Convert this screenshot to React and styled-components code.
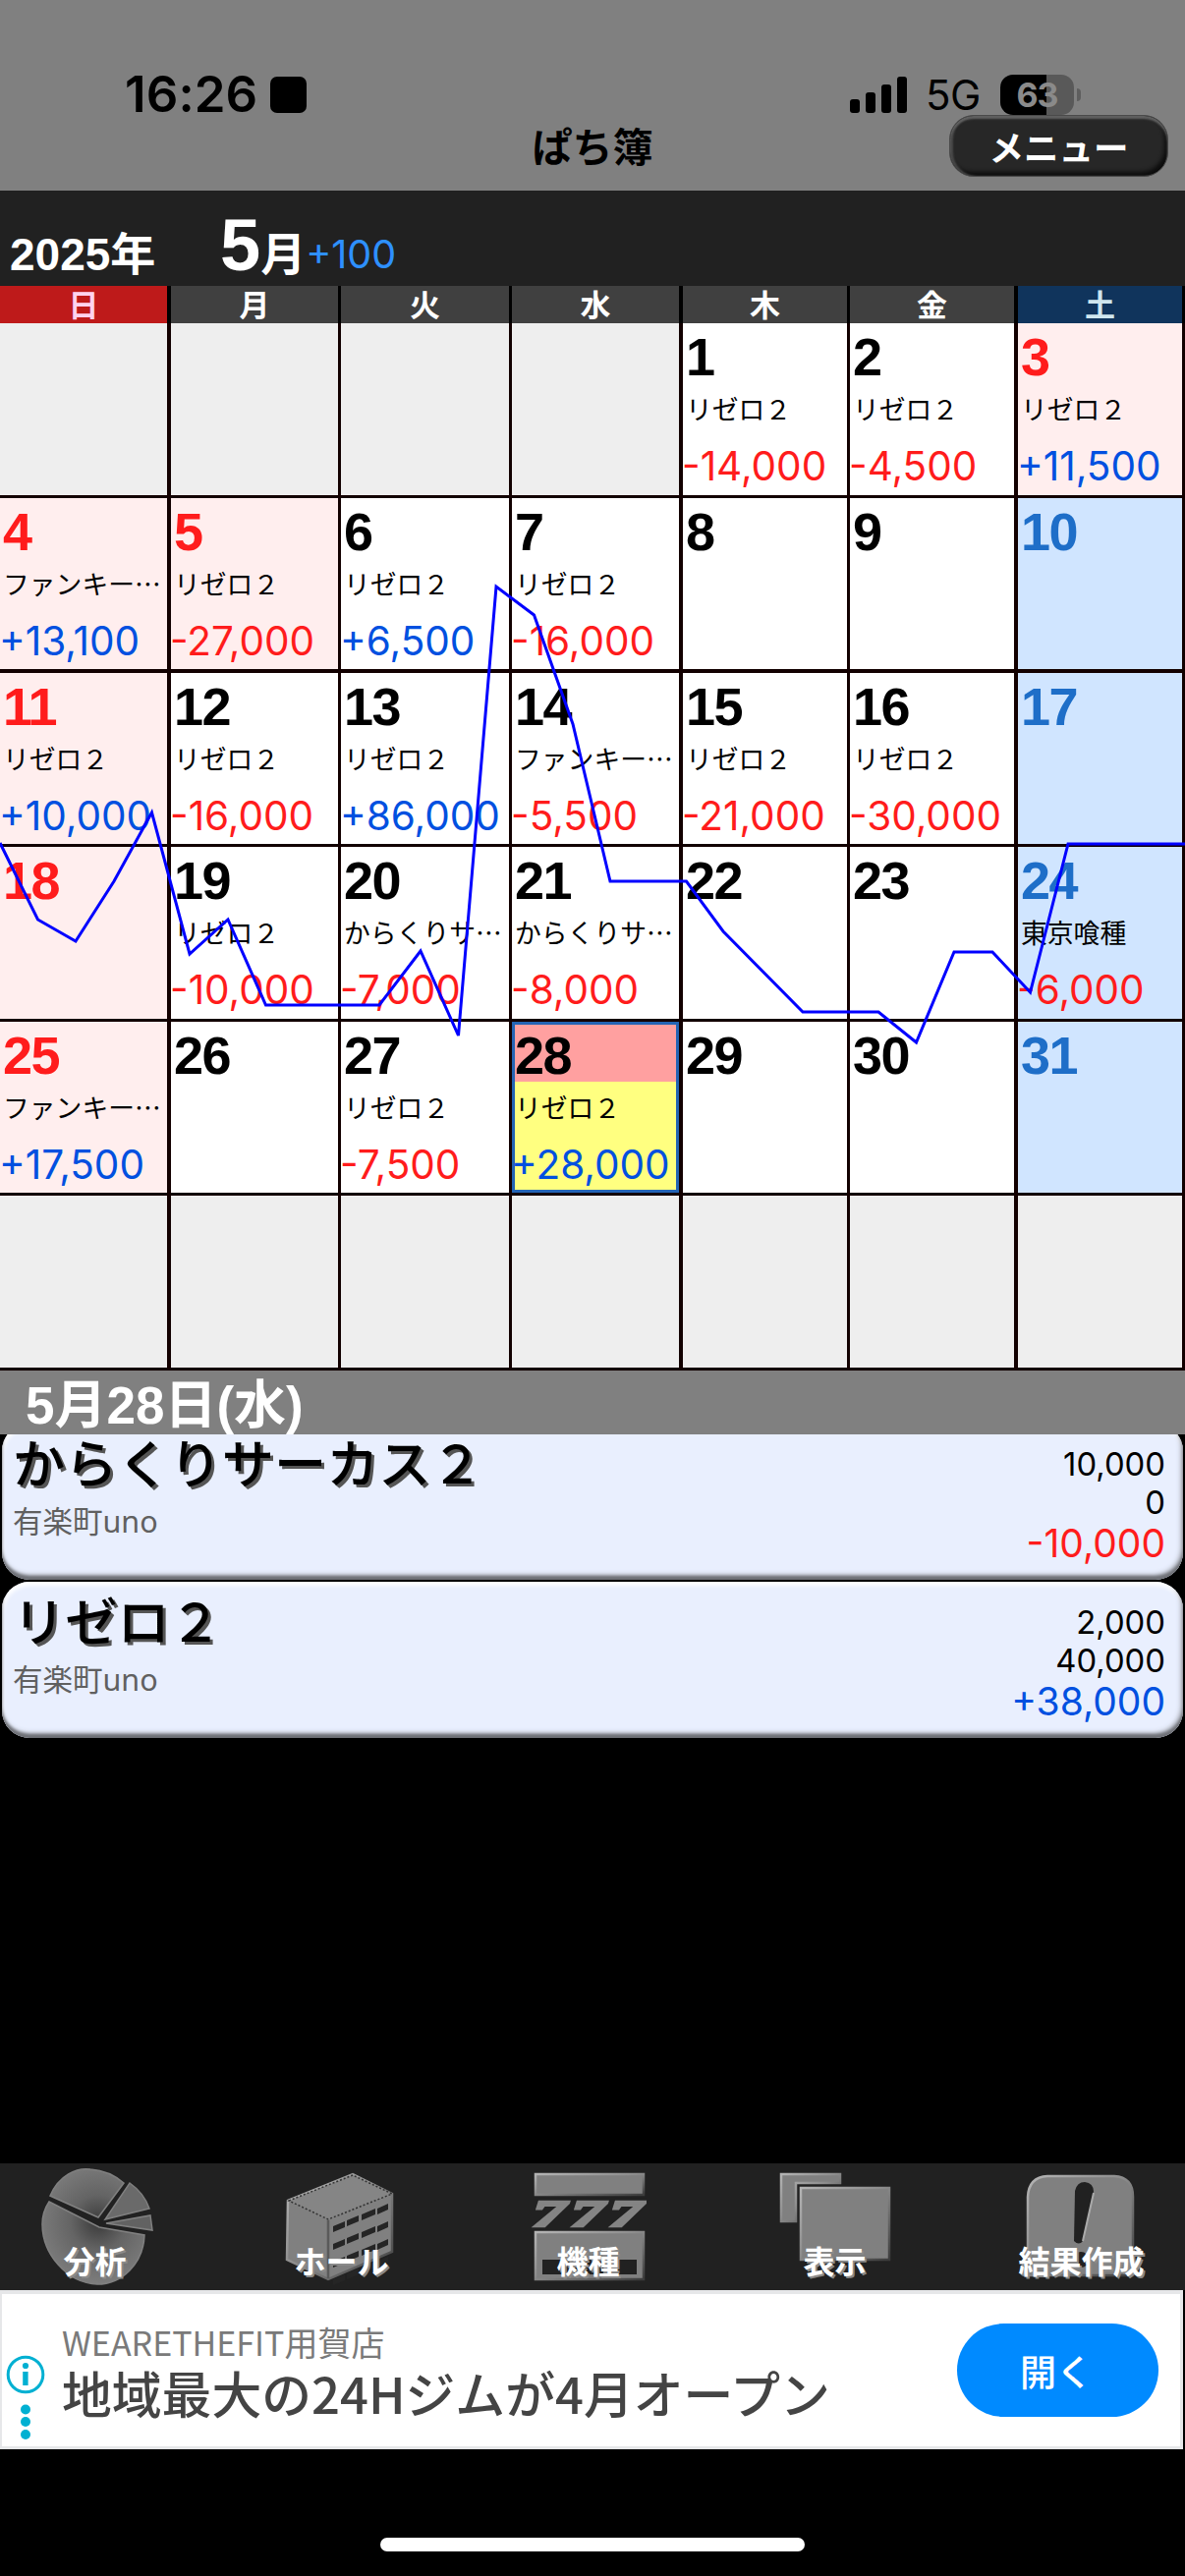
import React from "react";
import styled, { createGlobalStyle } from "styled-components";

const GlobalStyle = createGlobalStyle`
  * {
    box-sizing: border-box;
  }
  body {
    margin: 0;
    background: #000;
    font-family: Inter, "Noto Sans CJK JP", sans-serif;
  }
`;

const WEEKDAYS = ["日", "月", "火", "水", "木", "金", "土"];

const REZERO = "リゼロ２";
const FUNKY = "ファンキー…";
const KARAKURI = "からくりサ…";

const RESULTS = {
  1: [REZERO, -14000],
  2: [REZERO, -4500],
  3: [REZERO, 11500],
  4: [FUNKY, 13100],
  5: [REZERO, -27000],
  6: [REZERO, 6500],
  7: [REZERO, -16000],
  11: [REZERO, 10000],
  12: [REZERO, -16000],
  13: [REZERO, 86000],
  14: [FUNKY, -5500],
  15: [REZERO, -21000],
  16: [REZERO, -30000],
  19: [REZERO, -10000],
  20: [KARAKURI, -7000],
  21: [KARAKURI, -8000],
  24: ["東京喰種", -6000],
  25: [FUNKY, 17500],
  27: [REZERO, -7500],
  28: [REZERO, 28000],
};

const HOLIDAYS = [3, 5];
const SELECTED = 28;
const FIRST_WEEKDAY = 4;
const LAST_DAY = 31;

const ENTRIES = [
  { name: "からくりサーカス２", hall: "有楽町uno", invest: 10000, payout: 0 },
  { name: "リゼロ２", hall: "有楽町uno", invest: 2000, payout: 40000 },
];

const signed = (n) => (n > 0 ? "+" : "") + n.toLocaleString("en-US");

function kindOf(day, weekday) {
  if (day < 1 || day > LAST_DAY) return "empty";
  if (weekday === 0 || HOLIDAYS.includes(day)) return "holiday";
  if (weekday === 6) return "saturday";
  return "normal";
}

const cells = Array.from({ length: 42 }, (_, i) => {
  const day = i - FIRST_WEEKDAY + 1;
  return { key: i, day, kind: kindOf(day, i % 7), result: RESULTS[day] };
});

function PieIcon() {
  return (
    <IconSvg viewBox="0 0 120 129">
      <PieSlice fill="url(#pie)" d="M15 33 C24 12 42 4 56 6 C70 7 82 13 90 20 L64 55 Z" />
      <PieSlice fill="#6a6a6a" d="M96 20 C106 27 113 37 116 46 L71 57 Z" />
      <PieSlice fill="#626262" d="M117 53 L119 68 L72 61 Z" />
      <PieSlice fill="url(#pie)" d="M14 39 L65 65 L111 73 C110 102 88 123 63 123 C32 122 7 92 7 62 C7 53 10 45 14 39 Z" />
    </IconSvg>
  );
}

function HallIcon() {
  const rows = [0, 18, 36, 54];
  return (
    <IconSvg viewBox="0 0 120 129">
      <Piece d="M6 38 L72 11 L112 31 L112 90 L47 118 L5 98 Z" />
      <path d="M7 38 L72 12 L112 31 L47 57 Z" fill="#858585" stroke="#333" strokeWidth="1.5" strokeDasharray="2 2" />
      <path d="M47 58 L47 117" stroke="#5a5a5a" strokeWidth="2.5" />
      {rows.map((y) => (
        <g key={y} fill="#252525">
          <path d={`M52 ${64 + y} l12 -5 v6 l-12 5 z`} />
          <path d={`M66 ${58 + y} l12 -5 v6 l-12 5 z`} />
          <path d={`M81 ${52 + y} l14 -6 v6 l-14 6 z`} />
          <path d={`M97 ${46 + y} l11 -5 v6 l-11 5 z`} />
        </g>
      ))}
    </IconSvg>
  );
}

function MachineIcon() {
  return (
    <IconSvg viewBox="0 0 120 129">
      <Piece d="M7 11 H117 V32 H7 Z" />
      {[4, 43, 82].map((x) => (
        <SlotText key={x} x={x} y="64" textLength="34" lengthAdjust="spacingAndGlyphs">
          7
        </SlotText>
      ))}
      <Piece d="M7 70 H117 V118 H7 Z" />
      <path d="M14 98 H110 V113 H14 Z" fill="#212121" />
    </IconSvg>
  );
}

function ViewIcon() {
  return (
    <IconSvg viewBox="0 0 120 129">
      <Piece d="M6 11 H66 V20 H21 V59 H6 Z" />
      <Piece d="M26 25 H116 V98 H26 Z" />
    </IconSvg>
  );
}

function ReportIcon() {
  return (
    <IconSvg viewBox="0 0 120 129">
      <Piece d="M26 13 H94 Q113 14 113 34 V114 H6 V34 Q7 14 26 13 Z" />
      <path d="M54 28 Q56 19 64 19 Q73 20 73 29 L62 79 Q58 84 53 79 Z" fill="#212121" />
      <path d="M73 30 L62 79" stroke="#aaa" strokeWidth="2" />
      <circle cx="60" cy="98" r="8" fill="#212121" />
    </IconSvg>
  );
}

const TABS = [
  { label: "分析", Icon: PieIcon },
  { label: "ホール", Icon: HallIcon },
  { label: "機種", Icon: MachineIcon },
  { label: "表示", Icon: ViewIcon },
  { label: "結果作成", Icon: ReportIcon },
];

// running balance, drawn on top of the month grid (origin = top left of the first cell)
const BALANCE =
  "0,529 38.5,607 77,629 116,568 154.5,498 193,642 232,607 270.5,694 386,694 428,639 " +
  "466.5,725 505,268 543.5,297 583,408 621,568 698.5,568 736,619 817,701 894,701 " +
  "932.5,732 971,640 1010,640 1048.5,681 1087,530 1206,530";

function App() {
  return (
    <Screen>
      <GlobalStyle />
      <TopBar>
        <StatusBar>
          <Clock>16:26</Clock>
          <Stop />
          <Signal>
            <SignalBar $h={14} />
            <SignalBar $h={21} />
            <SignalBar $h={29} />
            <SignalBar $h={37} />
          </Signal>
          <Network>5G</Network>
          <Battery>63</Battery>
          <BatteryTip />
        </StatusBar>
        <TitleRow>
          <Title>ぱち簿</Title>
          <MenuButton>メニュー</MenuButton>
        </TitleRow>
      </TopBar>

      <MonthBar>
        <Year>2025<Kanji>年</Kanji></Year>
        <Month>5</Month>
        <Kanji>月</Kanji>
        <MonthTotal>+100</MonthTotal>
      </MonthBar>

      <WeekHeader>
        {WEEKDAYS.map((w, i) => (
          <Weekday key={w} $index={i}>{w}</Weekday>
        ))}
      </WeekHeader>

      <Calendar>
        {cells.map((c) => (
          <Cell key={c.key} $kind={c.kind} $selected={c.day === SELECTED}>
            {c.kind !== "empty" && <Day $kind={c.kind}>{c.day}</Day>}
            {c.result && <Machine>{c.result[0]}</Machine>}
            {c.result && <Amount $plus={c.result[1] > 0}>{signed(c.result[1])}</Amount>}
          </Cell>
        ))}
        <Graph viewBox="0 0 1206 1066">
          <polyline points={BALANCE} fill="none" stroke="#0000ff" strokeWidth="3" />
        </Graph>
      </Calendar>

      <DateBar>5月28日(水)</DateBar>

      <EntryList>
        {ENTRIES.map((e) => {
          const diff = e.payout - e.invest;
          return (
            <Entry key={e.name}>
              <div>
                <EntryName>{e.name}</EntryName>
                <EntryHall>{e.hall}</EntryHall>
              </div>
              <EntryNumbers>
                <EntryMoney>{e.invest.toLocaleString("en-US")}</EntryMoney>
                <EntryMoney>{e.payout.toLocaleString("en-US")}</EntryMoney>
                <EntryDiff $plus={diff > 0}>{signed(diff)}</EntryDiff>
              </EntryNumbers>
            </Entry>
          );
        })}
      </EntryList>

      <TabBar>
        <svg width="0" height="0">
          <defs>
            <linearGradient id="bevel" x1="0" y1="0" x2="1" y2="1">
              <stop offset="0" stopColor="#b4b4b4" />
              <stop offset="0.45" stopColor="#8e8e8e" />
              <stop offset="1" stopColor="#3c3c3c" />
            </linearGradient>
            <radialGradient id="pie" gradientUnits="userSpaceOnUse" cx="64" cy="60" r="62">
              <stop offset="0" stopColor="#3a3a3a" />
              <stop offset="0.45" stopColor="#646464" />
              <stop offset="1" stopColor="#7c7c7c" />
            </radialGradient>
          </defs>
        </svg>
        <Tabs>
          {TABS.map(({ label, Icon }) => (
            <Tab key={label}>
              <Icon />
              <TabLabel>{label}</TabLabel>
            </Tab>
          ))}
        </Tabs>
      </TabBar>

      <Ad>
        <AdMarks viewBox="0 0 40 90">
          <circle cx="20" cy="22" r="17.8" fill="none" stroke="#00b0d2" strokeWidth="3" />
          <circle cx="20" cy="13" r="3.1" fill="#00b0d2" />
          <path d="M17.2 19 h5.4 v14 h-5.4 z" fill="#00b0d2" />
          <circle cx="20" cy="57.5" r="5" fill="#00b0d2" />
          <circle cx="20" cy="70" r="5" fill="#00b0d2" />
          <circle cx="20" cy="83" r="5" fill="#00b0d2" />
        </AdMarks>
        <AdText>
          <AdName>WEARETHEFIT用賀店</AdName>
          <AdCopy>地域最大の24Hジムが4月オープン</AdCopy>
        </AdText>
        <AdButton>開く</AdButton>
      </Ad>

      <HomeIndicator />
    </Screen>
  );
}

export default App;

const RED = "#ff1c1c";
const BLUE = "#0050e0";
const COLUMNS = "174px 173px 174px 174px 170px 171px 170px";

const Screen = styled.div`
  width: 1206px;
  height: 2622px;
  display: flex;
  flex-direction: column;
  overflow: hidden;
  background: #000;
`;

const TopBar = styled.header`
  height: 194px;
  background: #808080;
`;

const StatusBar = styled.div`
  display: flex;
  align-items: center;
  height: 42px;
  margin-top: 75px;
  padding-left: 127px;
  color: #000;
`;

const Clock = styled.div`
  width: 148px;
  font-size: 51px;
  font-weight: 600;
  line-height: 42px;
  letter-spacing: 0.1px;
`;

const Stop = styled.div`
  width: 37px;
  height: 37px;
  border-radius: 7px;
  background: #000;
`;

const Signal = styled.div`
  display: flex;
  align-items: flex-end;
  gap: 6px;
  width: 77px;
  height: 37px;
  margin-left: 553px;
`;

const SignalBar = styled.div`
  width: 10px;
  height: ${(p) => p.$h}px;
  border-radius: 3px;
  background: #000;
`;

const Network = styled.div`
  width: 76px;
  font-size: 42px;
  line-height: 43px;
  letter-spacing: -0.5px;
`;

const Battery = styled.div`
  width: 75px;
  height: 41px;
  border-radius: 13px;
  background: linear-gradient(90deg, #000 47px, #595959 47px);
  color: #8a8a8a;
  font-size: 34px;
  font-weight: 700;
  line-height: 41px;
  text-align: center;
  letter-spacing: -1px;
`;

const BatteryTip = styled.div`
  width: 4px;
  height: 13px;
  margin-left: 3px;
  border-radius: 0 4px 4px 0;
  background: #5e5e5e;
`;

const TitleRow = styled.div`
  display: grid;
  grid-template-columns: 1fr auto 1fr;
  height: 64px;
`;

const Title = styled.h1`
  grid-column: 2;
  margin: 0;
  font-family: "Noto Sans CJK JP", sans-serif;
  font-size: 41px;
  font-weight: 700;
  line-height: 60px;
`;

const MenuButton = styled.button`
  justify-self: end;
  width: 223px;
  height: 63px;
  margin-right: 17px;
  padding: 0;
  border: 1px solid #4a4a4a;
  border-radius: 25px;
  background: #272727;
  box-shadow: inset 0 3px 2px #606060, inset 3px 0 2px #484848, inset -3px -4px 4px #0c0c0c;
  color: #fff;
  font-family: "Noto Sans CJK JP", sans-serif;
  font-size: 35.5px;
  font-weight: 700;
  line-height: 58px;
`;

const MonthBar = styled.div`
  display: flex;
  align-items: baseline;
  height: 97px;
  padding: 19px 0 0 10px;
  background: #212121;
  color: #fff;
  font-family: "Liberation Sans", "Noto Sans CJK JP", sans-serif;
  font-weight: 700;
`;

const Year = styled.div`
  width: 214px;
  font-size: 46px;
  line-height: 60px;
`;

const Kanji = styled.span`
  font-size: 46px;
  line-height: 46px;
`;

const Month = styled.div`
  font-size: 74px;
  line-height: 74px;
`;

const MonthTotal = styled.div`
  padding-bottom: 2px;
  color: #2e90ff;
  font-family: Inter, sans-serif;
  font-size: 39.5px;
  font-weight: 400;
  line-height: 40px;
  transform: translateY(-2px);
`;

const WeekHeader = styled.div`
  display: grid;
  grid-template-columns: ${COLUMNS};
  height: 38px;
`;

const weekdayColors = (i) => {
  if (i === 0) return "background: #be1a1a; color: #ffd2ee;";
  if (i === 6) return "background: #10345c; color: #cfe6ee;";
  return "background: #404040; color: #fff;";
};

const Weekday = styled.div`
  ${(p) => weekdayColors(p.$index)}
  border-right: ${(p) => ([0, 3, 5].includes(p.$index) ? 4 : 3)}px solid #000;
  font-family: "Noto Sans CJK JP", sans-serif;
  font-size: 31px;
  font-weight: 700;
  line-height: 36px;
  text-align: center;
`;

const Calendar = styled.div`
  position: relative;
  display: grid;
  grid-template-columns: ${COLUMNS};
  grid-template-rows: 178px 178px 177px 178px 177px 178px;
`;

const cellColors = {
  empty: "#eeeeee",
  holiday: "#ffeeee",
  saturday: "#d0e5ff",
  normal: "#ffffff",
};

const Cell = styled.div`
  min-width: 0;
  padding-top: 6px;
  border-right: 3px solid #120000;
  border-bottom: 3px solid #120000;
  background: ${(p) => cellColors[p.$kind]};
  white-space: nowrap;

  &:nth-child(7n + 1),
  &:nth-child(7n + 4),
  &:nth-child(7n + 6) {
    border-right-width: 4px;
  }

  &:nth-child(n + 8):nth-child(-n + 14) {
    border-bottom-width: 4px;
  }

  ${(p) =>
    p.$selected &&
    `
    background: linear-gradient(#ffa0a0 61px, #ffff80 61px);
    box-shadow: inset 0 0 0 3px #2464b4;
  `}
`;

const Day = styled.div`
  height: 56px;
  padding-left: 3px;
  color: ${(p) => ({ holiday: RED, saturday: "#1e6ec8" })[p.$kind] || "#000"};
  font-family: "Liberation Sans", sans-serif;
  font-size: 54px;
  font-weight: 700;
  line-height: 56px;
  letter-spacing: -1.5px;
`;

const Machine = styled.div`
  height: 50px;
  padding-left: 3px;
  color: #000;
  font-family: "Noto Sans CJK JP", sans-serif;
  font-size: 26.8px;
  line-height: 50px;
`;

const Amount = styled.div`
  height: 49px;
  margin: 9px 0 0 -1px;
  color: ${(p) => (p.$plus ? BLUE : RED)};
  font-size: 40.5px;
  line-height: 49px;
`;

const Graph = styled.svg`
  position: absolute;
  top: 0;
  left: 0;
  width: 1206px;
  height: 1066px;
`;

const DateBar = styled.div`
  position: relative;
  height: 65px;
  padding-left: 26px;
  background: #808080;
  color: #fff;
  font-family: "Liberation Sans", "Noto Sans CJK JP", sans-serif;
  font-size: 53px;
  font-weight: 700;
  line-height: 72px;
`;

const EntryList = styled.div`
  display: flex;
  flex-direction: column;
  gap: 2px;
  height: 742px;
  overflow: hidden;

  & > :first-child {
    margin-top: -11px;
  }
`;

const Entry = styled.div`
  display: flex;
  justify-content: space-between;
  flex: none;
  height: 159px;
  margin: 0 2px;
  padding: 5px 18px 0 11px;
  border-radius: 28px;
  background: #e9effe;
  box-shadow: inset 0 -4px 3px #6e7076, inset -2px -5px 5px #a4a7b0, inset 1px 4px 4px #fff;
`;

const EntryName = styled.div`
  color: #000;
  font-family: "Noto Sans CJK JP", sans-serif;
  font-size: 53.2px;
  font-weight: 500;
  line-height: 66px;
  text-shadow: 3px 3px 0 #555;
`;

const EntryHall = styled.div`
  color: #606060;
  font-family: "Noto Sans", "Noto Sans CJK JP", sans-serif;
  font-size: 30.5px;
  line-height: 56px;
`;

const EntryNumbers = styled.div`
  padding-top: 17px;
  text-align: right;
`;

const EntryMoney = styled.div`
  color: #000;
  font-size: 32.8px;
  line-height: 39px;
`;

const EntryDiff = styled.div`
  color: ${(p) => (p.$plus ? BLUE : RED)};
  font-size: 39px;
  line-height: 44px;
`;

const TabBar = styled.nav`
  height: 129px;
  overflow: hidden;
  background: #212121;

  & > svg {
    display: block;
  }
`;

const Tabs = styled.div`
  display: grid;
  grid-template-columns: repeat(5, 251px);
  margin-left: -29px;
`;

const Tab = styled.div`
  display: grid;
  justify-items: center;
  height: 129px;

  & > * {
    grid-area: 1 / 1;
  }
`;

const IconSvg = styled.svg`
  width: 120px;
  height: 129px;
  margin-right: 2px;
`;

const Piece = styled.path`
  fill: #808080;
  stroke: url(#bevel);
  stroke-width: 2.5px;
`;

const PieSlice = styled.path`
  stroke: #808080;
  stroke-width: 1.5px;
`;

const SlotText = styled.text`
  fill: #848484;
  stroke: #848484;
  stroke-width: 2.5px;
  font-family: "Liberation Serif", serif;
  font-size: 38px;
  font-weight: 700;
  font-style: italic;
`;

const TabLabel = styled.span`
  align-self: end;
  color: #fff;
  font-family: "Noto Sans CJK JP", sans-serif;
  font-size: 32px;
  font-weight: 700;
  line-height: 32px;
  padding-bottom: 15px;
  text-shadow: 2px 2px 0 #8a8a8a;
`;

const Ad = styled.aside`
  display: flex;
  width: 1204px;
  height: 162px;
  border: 3px solid #e6e7e9;
  border-width: 4px 3px 3px 2px;
  background: #fff;
`;

const AdMarks = styled.svg`
  width: 40px;
  height: 90px;
  margin: 60px 0 0 4px;
`;

const AdText = styled.div`
  flex: 1;
  padding: 27px 0 0 17px;
  font-family: "Noto Sans CJK JP", sans-serif;
  white-space: nowrap;
`;

const AdName = styled.div`
  color: #7a7a7a;
  font-size: 34px;
  font-weight: 400;
  line-height: 43px;
`;

const AdCopy = styled.div`
  color: #444;
  font-size: 50.8px;
  font-weight: 500;
  line-height: 60px;
`;

const AdButton = styled.button`
  width: 205px;
  height: 95px;
  margin: 30px 22px 0 0;
  padding: 0 3px 0 0;
  border: 0;
  border-radius: 48px;
  background: #008aff;
  color: #fff;
  font-family: "Noto Sans CJK JP", sans-serif;
  font-size: 37px;
  font-weight: 500;
`;

const HomeIndicator = styled.div`
  width: 432px;
  height: 14px;
  margin: 90px auto 0;
  border-radius: 7px;
  background: #fff;
`;
